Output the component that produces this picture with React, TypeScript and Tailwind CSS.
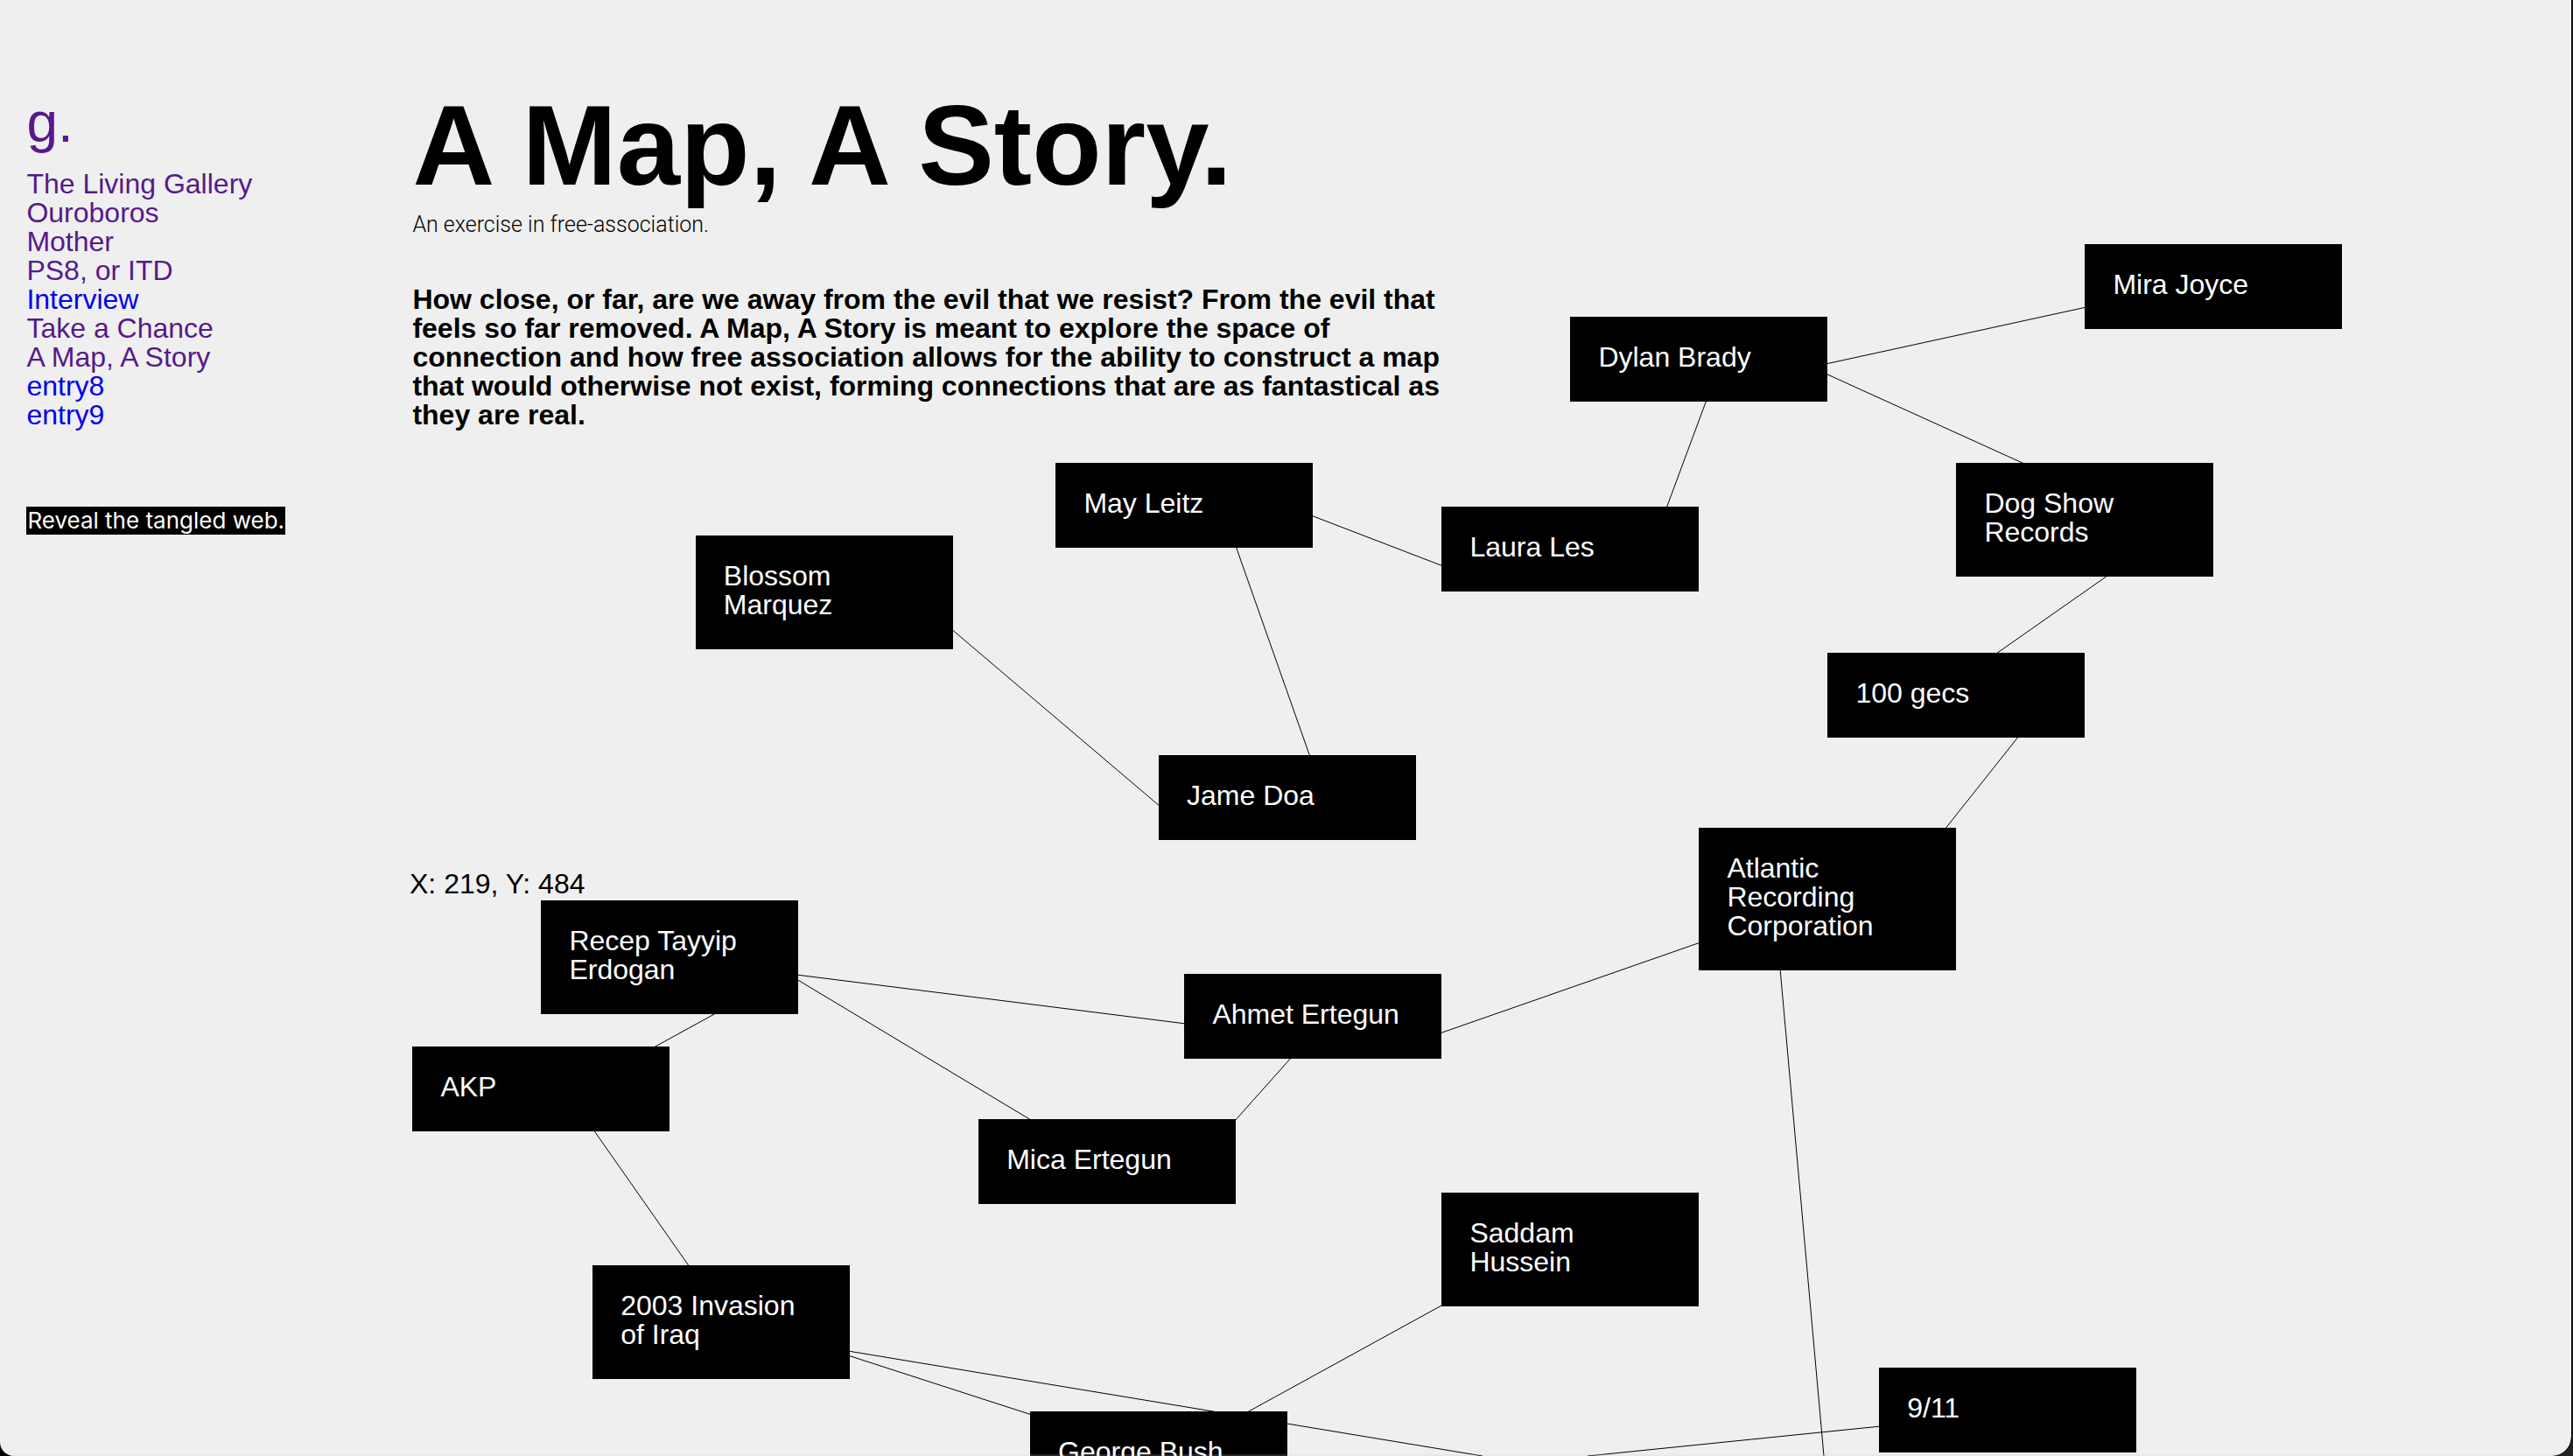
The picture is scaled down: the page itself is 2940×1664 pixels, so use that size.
const NAV = [
  { label: "The Living Gallery", visited: true },
  { label: "Ouroboros", visited: true },
  { label: "Mother", visited: true },
  { label: "PS8, or ITD", visited: true },
  { label: "Interview", visited: false },
  { label: "Take a Chance", visited: true },
  { label: "A Map, A Story", visited: true },
  { label: "entry8", visited: false },
  { label: "entry9", visited: false },
];

// x is in hundredths of the window's width, y in pixels.
const NODES = [
  { label: "Mira Joyce", x: 81, y: 279 },
  { label: "Dylan Brady", x: 61, y: 362 },
  { label: "Dog Show Records", x: 76, y: 529 },
  { label: "Laura Les", x: 56, y: 579 },
  { label: "May Leitz", x: 41, y: 529 },
  { label: "Blossom Marquez", x: 27, y: 612 },
  { label: "100 gecs", x: 71, y: 746 },
  { label: "Jame Doa", x: 45, y: 863 },
  { label: "Atlantic Recording Corporation", x: 66, y: 946 },
  { label: "Recep Tayyip Erdogan", x: 21, y: 1029 },
  { label: "Ahmet Ertegun", x: 46, y: 1113 },
  { label: "AKP", x: 16, y: 1196 },
  { label: "Mica Ertegun", x: 38, y: 1279 },
  { label: "Saddam Hussein", x: 56, y: 1363 },
  { label: "2003 Invasion of Iraq", x: 23, y: 1446 },
  { label: "George Bush", x: 40, y: 1613 },
  { label: "9/11", x: 73, y: 1563 },
];

// [x1, y1, x2, y2] on a 2940 pixel wide drawing.
const LINES = [
  [2085, 416, 2383, 351],
  [2085, 427, 2312, 530],
  [1949, 457, 1903, 581],
  [1497, 589, 1648, 647],
  [1411, 624, 1496, 865],
  [1085, 718, 1325, 922],
  [2407, 658, 2280, 747],
  [2306, 841, 2221, 948],
  [1942, 1077, 1644, 1181],
  [2033, 1107, 2083, 1664],
  [909, 1114, 1354, 1170],
  [909, 1119, 1177, 1280],
  [817, 1158, 746, 1197],
  [677, 1291, 787, 1448],
  [1475, 1208, 1409, 1282],
  [1648, 1491, 1424, 1614],
  [968, 1549, 1178, 1617],
  [968, 1544, 1693, 1664],
  [2148, 1630, 1813, 1664],
];

const percent = (x: number) => `${(x / 2940) * 100}%`;

function Sidebar() {
  return (
    <aside className="w-[16vw] shrink-0 pl-[1vw] pt-[104px]">
      <a href="#home" className="block text-[64px] leading-[72px] text-[#551a8b]">
        g.
      </a>
      <nav className="mt-[18px] flex flex-col items-start">
        {NAV.map((n) => (
          <a
            key={n.label}
            href={`#${n.label}`}
            className={n.visited ? "text-[#551a8b]" : "text-[#0000ee]"}
          >
            {n.label}
          </a>
        ))}
      </nav>
      <button
        type="button"
        className="mt-[88px] block whitespace-nowrap bg-black px-px font-[Inter,sans-serif] text-[26px] leading-8 text-white"
      >
        Reveal the tangled web.
      </button>
    </aside>
  );
}

function Web() {
  return (
    <div className="absolute inset-y-0 left-px w-screen">
      <svg className="h-full w-full" aria-hidden="true">
        {LINES.map(([x1, y1, x2, y2], i) => (
          <line key={i} x1={percent(x1)} y1={y1} x2={percent(x2)} y2={y2} stroke="#000" strokeWidth="1" />
        ))}
      </svg>
      {NODES.map((n) => (
        <div
          key={n.label}
          className="absolute w-[10vw] bg-black px-8 pb-[34px] pt-[30px] text-white"
          style={{ left: `${n.x}vw`, top: n.y }}
        >
          {n.label}
        </div>
      ))}
      <p className="absolute left-[467px] top-[994px]">X: 219, Y: 484</p>
    </div>
  );
}

export default function App() {
  return (
    <div className="h-screen overflow-hidden bg-[#222]">
      <div className="mr-px h-full overflow-hidden rounded-br-[22px] border-r border-black bg-black">
        <div className="relative flex h-full overflow-hidden rounded-bl-[16px] rounded-br-[22px] bg-[#efefef] font-['Liberation_Sans',Arial,sans-serif] text-[32px] leading-[33px] text-black">
          <Web />
          <div className="relative flex w-full pl-px">
            <Sidebar />
            <main className="w-[40vw] pt-[100px]">
              <h1 className="whitespace-nowrap text-[130px] font-bold leading-[132px]">A Map, A Story.</h1>
              <p className="mt-[9px] font-[Roboto,sans-serif] text-[25px] font-light leading-8">
                An exercise in free-association.
              </p>
              <p className="mt-[53px] font-bold">
                How close, or far, are we away from the evil that we resist? From the evil that
                feels so far removed. A Map, A Story is meant to explore the space of connection
                and how free association allows for the ability to construct a map that would
                otherwise not exist, forming connections that are as fantastical as they are real.
              </p>
            </main>
          </div>
          <div className="absolute inset-x-0 bottom-0 h-[2px] bg-[#ccc]/20" />
        </div>
      </div>
    </div>
  );
}
